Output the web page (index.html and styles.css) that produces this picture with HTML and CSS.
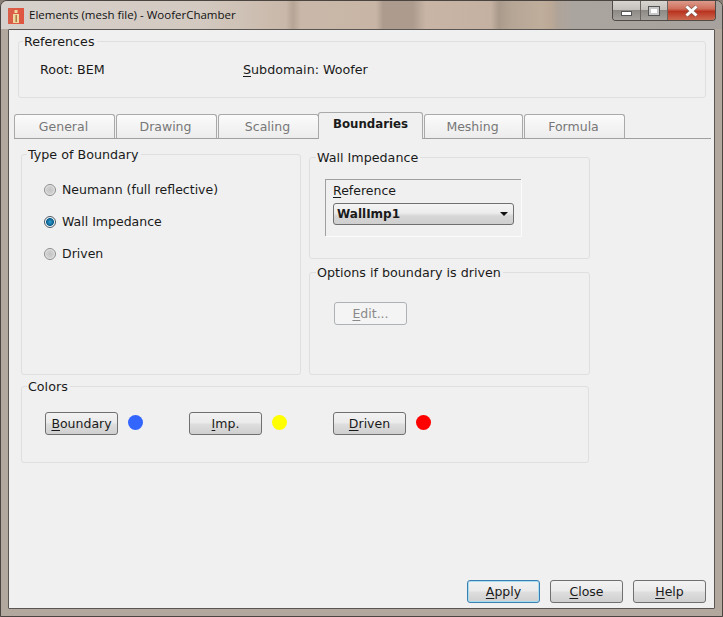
FILE: index.html
```html
<!DOCTYPE html>
<html lang="en">
<head>
<meta charset="utf-8">
<title>Elements (mesh file) - WooferChamber</title>
<link rel="stylesheet" href="styles.css">
</head>
<body>
<div class="window">
  <header class="titlebar">
    <svg class="appicon" width="16" height="16" viewBox="0 0 16 16"><defs><linearGradient id="ig" x1="0" y1="0" x2="1" y2="0"><stop offset="0" stop-color="#d9604a"/><stop offset="1" stop-color="#e0553f"/></linearGradient></defs><rect width="16" height="16" fill="url(#ig)"/><rect x="5" y="6" width="6" height="9" fill="#efd7a2"/><rect x="6.5" y="2" width="3" height="3" fill="#efd7a2"/><rect x="7.5" y="7" width="1.4" height="7" fill="#a8743a"/></svg>
    <span class="title">Elements (mesh file) - WooferChamber</span>
    <div class="caption">
      <span class="cap cap-min"><i class="min-glyph"></i></span>
      <span class="cap cap-max"><i class="max-glyph"></i></span>
      <span class="cap cap-close"><svg width="15" height="12" viewBox="0 0 15 12"><path d="M2.5 1.5 L12.5 10.5 M12.5 1.5 L2.5 10.5" stroke="#7a5a50" stroke-width="4" fill="none"/><path d="M2.5 1.5 L12.5 10.5 M12.5 1.5 L2.5 10.5" stroke="#fff" stroke-width="3" fill="none"/></svg></span>
    </div>
  </header>
  <main class="client">
    <fieldset class="group refs">
      <legend>References</legend>
      <div class="refs-row">
        <span class="ref-root">Root: BEM</span>
        <span><u>S</u>ubdomain: Woofer</span>
      </div>
    </fieldset>

    <nav class="tabs">
      <span class="tab">General</span>
      <span class="tab">Drawing</span>
      <span class="tab">Scaling</span>
      <span class="tab tab-active">Boundaries</span>
      <span class="tab tab-narrow">Meshing</span>
      <span class="tab">Formula</span>
    </nav>

    <section class="pane">
      <div class="pane-top">
        <fieldset class="group type-group">
          <legend>Type of Boundary</legend>
          <div class="radios">
            <label class="radio"><span class="dot"></span>Neumann (full reflective)</label>
            <label class="radio"><span class="dot dot-on"></span>Wall Impedance</label>
            <label class="radio"><span class="dot"></span>Driven</label>
          </div>
        </fieldset>
        <div class="right-col">
          <fieldset class="group wall-group">
            <legend>Wall Impedance</legend>
            <div class="ref-box">
              <div class="ref-label"><u>R</u>eference</div>
              <div class="combo"><span>WallImp1</span><i class="arrow"></i></div>
            </div>
          </fieldset>
          <fieldset class="group opts-group">
            <legend>Options if boundary is driven</legend>
            <div class="opts-body">
              <span class="btn btn-disabled"><span><u>E</u>dit...</span></span>
            </div>
          </fieldset>
        </div>
      </div>
      <fieldset class="group colors-group">
        <legend>Colors</legend>
        <div class="color-row">
          <span class="color-item"><span class="btn"><span><u>B</u>oundary</span></span><i class="swatch swatch-blue"></i></span>
          <span class="color-item"><span class="btn"><span><u>I</u>mp.</span></span><i class="swatch swatch-yellow"></i></span>
          <span class="color-item"><span class="btn"><span><u>D</u>riven</span></span><i class="swatch swatch-red"></i></span>
        </div>
      </fieldset>
    </section>

    <footer class="actions">
      <span class="btn btn-default"><span><u>A</u>pply</span></span>
      <span class="btn"><span><u>C</u>lose</span></span>
      <span class="btn"><span><u>H</u>elp</span></span>
    </footer>
  </main>
</div>
</body>
</html>
```
FILE: styles.css
```css
* { box-sizing: border-box; }
html, body { margin: 0; padding: 0; }
body {
  width: 723px; height: 617px; overflow: hidden; background: #8a7f76;
  font-family: "DejaVu Sans", Verdana, sans-serif; font-size: 12.5px; line-height: 14px; color: #1a1a1a;
}
u { text-decoration: underline; text-underline-offset: 2px; text-decoration-thickness: 1px; }
.window {
  width: 723px; height: 617px; display: flex; flex-direction: column;
  padding: 0 7px 7px 7px; border: 1px solid #4a4540; border-radius: 7px 7px 0 0;
  background: #b3a89e;
}
.titlebar {
  height: 28px; display: flex; align-items: center; margin: 0 -7px; padding-left: 7px; flex: none;
  background: linear-gradient(90deg, #d6d1cc 0, #d3c9c0 200px, #c9b8a9 285px, #b6a495 292px, #c9b8a9 300px, #c8b5a6 375px, #ad9c8e 382px, #ad9c8e 412px, #c8b5a6 425px, #c4b1a2 490px, #a99a8b 498px, #b5a595 510px, #c0ae9c 540px, #bba996 550px, #b0a498 556px, #aba59f 570px, #a7a29d 721px);
  border-radius: 6px 6px 0 0;
}
.appicon { margin-right: 5px; margin-top: 1px; }
.title { font-family: "Open Sans", "Liberation Sans", sans-serif; font-size: 11.5px; color: #111; flex: 1; }
.caption { display: flex; align-self: flex-start; margin-right: 6px; height: 20px; border: 1px solid #4f4a46; border-top: none; border-radius: 0 0 4px 4px; overflow: hidden; }
.cap { display: flex; align-items: center; justify-content: center; height: 19px; border-right: 1px solid #6a6560; }
.cap-min { width: 28px; background: linear-gradient(180deg, #d8d4d0 0, #c4c0bb 45%, #8d8a86 50%, #a5a29e 100%); }
.cap-max { width: 27px; background: linear-gradient(180deg, #d8d4d0 0, #c4c0bb 45%, #8d8a86 50%, #a5a29e 100%); }
.cap-close { width: 47px; border-right: none; background: linear-gradient(180deg, #dc9b8c 0, #d0705c 40%, #b93420 55%, #cc6a50 100%); }
.min-glyph { width: 11px; height: 5px; background: #fff; border: 1px solid #555; margin-top: 6px; }
.max-glyph { width: 12px; height: 10px; background: #fff; border: 1px solid #555; box-shadow: inset 0 0 0 2px #c8c8c8; }
.client {
  flex: 1; position: relative; display: flex; flex-direction: column; min-height: 0;
  background: #f0f0f0; border: 1px solid #5a5653; border-radius: 1px; padding: 3px 8px 5px 9px;
}
.group { margin: 0; padding: 0; border: 1px solid #dfdfdf; border-radius: 3px; min-width: 0; }
.group legend { padding: 2px 2px 0 1px; margin-left: 5px; line-height: 14px; font-size: 12.7px; }
.refs { height: 65px; flex: none; }
.refs legend { margin-left: 4px; }
.refs-row { display: flex; padding: 14px 0 0 21px; font-size: 12.7px; }
.ref-root { width: 203px; }
.tabs { display: flex; align-items: flex-end; height: 41px; margin: 0 -5px 0 -4px; border-bottom: 1px solid #a0a0a0; flex: none; }
.tab {
  width: 101px; height: 24px; margin-right: 1px; display: flex; align-items: center; justify-content: center;
  color: #777; padding: 1px 2px 0 0;
  border: 1px solid #a9a9a9; border-bottom: none; border-radius: 3px 3px 0 0;
  background: linear-gradient(180deg, #fbfbfb, #ececec);
}
.tab-active { width: 105px; height: 27px; margin: 0 1px -1px -2px; font-weight: 700; font-size: 11.8px; color: #1a1a1a; background: #f0f0f0; position: relative; padding: 0 0 4px 0; }
.tab-narrow { width: 99px; }
.pane { display: flex; flex-direction: column; padding: 7px 0 0 3px; flex: none; }
.pane-top { display: flex; gap: 8px; height: 229px; }
.type-group { width: 280px; height: 229px; }
.radios { display: flex; flex-direction: column; gap: 18px; padding: 21px 0 0 22px; }
.radio { display: flex; align-items: center; gap: 6px; }
.dot { width: 12px; height: 12px; border-radius: 50%; flex: none; border: 1px solid #8a8a8a; background: radial-gradient(circle, #c4c4c4 0, #d0d0d0 50%, #f2f2f2 75%, #e2e2e2 100%); }
.dot-on { border-color: #4a5a66; background: radial-gradient(circle, #2f9fd0 0, #0b5f8f 50%, #f4f4f4 62%, #f4f4f4 100%); }
.right-col { display: flex; flex-direction: column; width: 281px; padding-top: 3px; }
.right-col legend { margin-left: 6px; }
.wall-group { height: 110px; }
.ref-box { width: 196px; height: 57px; margin: 14px 0 0 15px; border: 1px solid #a0a0a0; border-width: 1px 0 0 1px; border-radius: 0; box-shadow: 1px 1px 0 #fbfbfb; padding: 4px 0 0 7px; }
.ref-label { height: 19px; }
.combo { width: 181px; height: 22px; display: flex; align-items: center; justify-content: space-between; padding: 0 4px 0 3px; border: 1px solid #707070; border-radius: 3px; font-weight: 700; font-size: 12px; background: linear-gradient(180deg, #f4f4f4 0, #ececec 45%, #d6d6d6 60%, #cfcfcf 100%); }
.arrow { width: 0; height: 0; border-left: 4px solid transparent; border-right: 4px solid transparent; border-top: 4px solid #111; margin-right: 1px; }
.opts-group { height: 111px; margin-top: 5px; }
.opts-body { padding: 22px 0 0 24px; }
.btn { width: 73px; height: 23px; display: inline-flex; align-items: center; justify-content: center; flex: none; border: 1px solid #707070; border-radius: 3px; background: linear-gradient(180deg, #f2f2f2 0, #ebebeb 45%, #dddddd 55%, #cfcfcf 100%); }
.btn-disabled { color: #8a8a8a; border-color: #adb2b5; background: #f4f4f4; }
.btn-default { border-color: #3c7fb1; box-shadow: inset 0 0 0 1px #a8dcf0; }
.colors-group { width: 568px; height: 85px; margin-top: 3px; }
.color-row { display: flex; padding: 18px 0 0 23px; }
.color-item { width: 144px; display: flex; align-items: center; }
.swatch { width: 15px; height: 15px; border-radius: 50%; margin-left: 10px; margin-top: -2px; }
.swatch-blue { background: #3366ff; }
.swatch-yellow { background: #ffff00; }
.swatch-red { background: #ff0000; }
.actions { display: flex; justify-content: flex-end; gap: 10px; margin-top: auto; }
```
